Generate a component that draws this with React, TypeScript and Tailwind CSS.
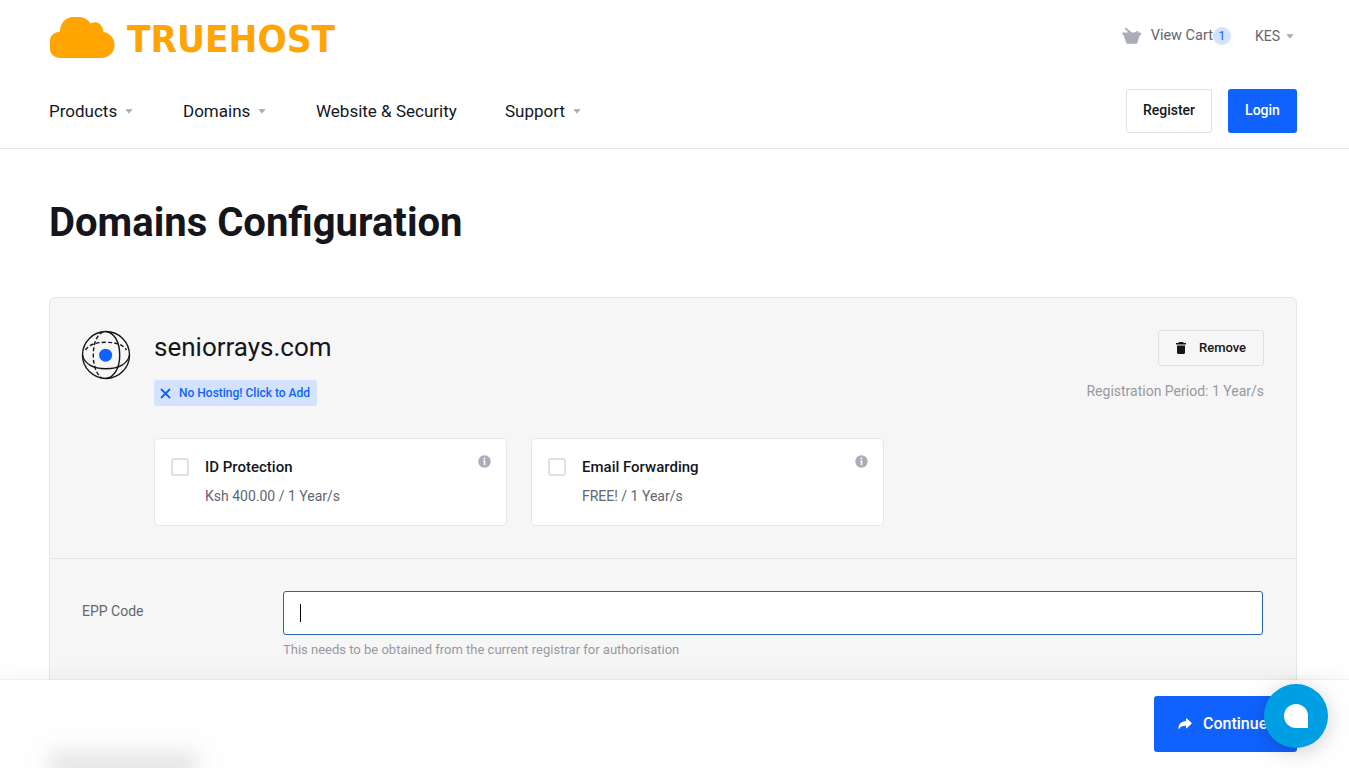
import React from 'react';

function Caret({ className = '' }: { className?: string }) {
  return (
    <svg width="8" height="5" viewBox="0 0 8 5" className={`shrink-0 ${className}`}>
      <path d="M0.8 0.3h6.4L4 4.3z" fill="#a9adb7" stroke="#a9adb7" strokeWidth="0.6" strokeLinejoin="round" />
    </svg>
  );
}

function Logo() {
  return (
    <svg width="290" height="44" viewBox="0 0 290 44" className="block">
      <path
        d="M11.5 42C5 42 1 37.500 1 33V24.500C1 20 4.500 16.500 11 15.500C11 7.500 16.500 1 24 1H30C35 1 39 3.500 41.500 7.500C47.500 4 54 8 54.500 16C61 17 65.500 22.500 65.500 29C65.500 36.500 60 42 52 42Z"
        fill="#ffa400"
      />
      <text
        x="78"
        y="35.500"
        textLength="208"
        lengthAdjust="spacingAndGlyphs"
        fontSize="38"
        fontWeight="700"
        fill="#ffa400"
        className="font-['DejaVu_Sans',sans-serif]"
      >
        TRUEHOST
      </text>
    </svg>
  );
}

function BasketIcon() {
  return (
    <svg width="20" height="18" viewBox="0 0 20 18" className="shrink-0">
      <path
        d="M0.500 5.400h6L2.700 1.700 4 0.400l5.600 5h3L15.300 3.900c.7-.3 1.100.2.900.7l-.5.800H19v2.300l-1.200.6-2.500 7.500c-.2.700-.6 1-1.300 1H5.500c-.7 0-1.100-.3-1.300-1L1.700 8.300.5 7.700z"
        fill="#a9adb7"
      />
    </svg>
  );
}

function GlobeIcon() {
  return (
    <svg width="50" height="50" viewBox="0 0 50 50" fill="none" stroke="#14161c" strokeWidth="1.400" className="block">
      <circle cx="25" cy="25" r="23.500" />
      <path d="M1.500 25C3 33.500 12 38.700 25 38.700S47 33.500 48.500 25" />
      <path d="M25 1.500C33.500 3 38.700 12 38.700 25S33.500 47 25 48.500" />
      <path d="M4.500 20C8 14.500 15 12.300 25 12.300S42 14.500 45.500 20" strokeDasharray="4 2.200" />
      <path d="M22 1.800C15.500 5 12.300 14 12.300 25S15.500 44 20.500 48" strokeDasharray="4 2.200" />
      <circle cx="24.600" cy="25.200" r="6.500" fill="#1062fe" stroke="none" />
    </svg>
  );
}

function InfoIcon() {
  return (
    <svg width="13" height="13" viewBox="0 0 13 13" className="block shrink-0">
      <circle cx="6.500" cy="6.500" r="6.200" fill="#a9adb7" />
      <circle cx="6.500" cy="3.600" r="1" fill="#fff" />
      <path d="M5 5.500h2.300v4.700H5.800V6.600H5z" fill="#fff" />
    </svg>
  );
}

function Addon({ title, price }: { title: string; price: string }) {
  return (
    <div className="flex h-[88px] w-[353px] rounded-[5px] border border-[#e6e7e9] bg-white pl-4 pr-[15px]">
      <span className="mt-[19px] size-[18px] shrink-0 rounded-[3px] border-2 border-[#dfe0e3] bg-white" />
      <div className="ml-4 flex-1 pt-[18px]">
        <div className="text-[15px] font-medium leading-5 text-[#14161c]">{title}</div>
        <div className="mt-[9px] text-sm leading-5 text-[#62666f]">{price}</div>
      </div>
      <div className="mt-4">
        <InfoIcon />
      </div>
    </div>
  );
}

const nav = [
  { label: 'Products', caret: true, width: 'w-[134px]' },
  { label: 'Domains', caret: true, width: 'w-[133px]' },
  { label: 'Website & Security', caret: false, width: 'w-[189px]' },
  { label: 'Support', caret: true, width: 'w-[100px]' },
];

export default function App() {
  return (
    <div className="relative h-[768px] w-[1349px] overflow-hidden bg-white font-['Roboto',sans-serif] text-[#14161c]">
      <header className="h-[149px] border-b border-[#e6e7e9] pl-[49px] pr-[52px]">
        <div className="flex h-[73px] items-center justify-between">
          <div className="mt-0.5">
            <Logo />
          </div>
          <div className="flex items-center pr-[3px] text-sm text-[#62666f]">
            <BasketIcon />
            <span className="ml-[9px] text-[14.500px]">View Cart</span>
            <span className="flex size-[18px] items-center justify-center rounded-full bg-[#d3e2ff] text-xs text-[#1062fe]">1</span>
            <span className="ml-6">KES</span>
            <Caret className="ml-1.5" />
          </div>
        </div>
        <div className="flex h-[76px] items-center justify-between">
          <nav className="flex text-[17px] leading-6">
            {nav.map((n) => (
              <div key={n.label} className={`flex items-center whitespace-nowrap ${n.width}`}>
                {n.label}
                {n.caret && <Caret className="ml-2" />}
              </div>
            ))}
          </nav>
          <div className="flex gap-4 text-sm font-medium">
            <button className="h-11 w-[86px] rounded-[3px] border border-[#dfe0e3] bg-white pb-0.5">Register</button>
            <button className="h-11 w-[69px] rounded-[3px] bg-[#1062fe] pb-0.5 text-white">Login</button>
          </div>
        </div>
      </header>

      <main className="pl-[49px] pr-[52px]">
        <h1 className="pt-[50px] text-[40px] font-bold leading-[48px]">Domains Configuration</h1>
        <section className="mt-[50px] h-[400px] rounded-md border border-[#e6e7e9] bg-[#f6f6f6]">
          <div className="flex h-[261px] border-b border-[#e6e7e9] pl-[31px] pr-8 pt-8">
            <GlobeIcon />
            <div className="ml-[23px] flex-1">
              <div className="text-[26px] leading-[34px]">seniorrays.com</div>
              <div className="mt-4 flex h-[26px] w-[163px] items-center rounded-[3px] bg-[#d3e2ff] pl-1.5 text-xs font-medium text-[#1062fe]">
                <svg width="11" height="11" viewBox="0 0 11 11" className="mr-2 shrink-0">
                  <path d="M1 1l9 9M10 1l-9 9" stroke="#1062fe" strokeWidth="1.800" />
                </svg>
                <span className="whitespace-nowrap">No Hosting! Click to Add</span>
              </div>
              <div className="mt-8 flex gap-6">
                <Addon title="ID Protection" price="Ksh 400.00 / 1 Year/s" />
                <Addon title="Email Forwarding" price="FREE! / 1 Year/s" />
              </div>
            </div>
            <div className="flex w-[200px] shrink-0 flex-col items-end">
              <button className="flex h-9 w-[106px] items-center rounded-[3px] border border-[#dfe0e3] pl-[17px] text-[13px] font-medium">
                <svg width="10" height="12" viewBox="0 0 10 12" className="mr-[13px]" fill="#14161c">
                  <path d="M3 0h4l.7.900H10v1.700H0V.9h2.300zM1 3.500h8v7.300c0 .7-.5 1.200-1.200 1.200H2.200C1.500 12 1 11.500 1 10.800z" />
                </svg>
                Remove
              </button>
              <div className="mt-[15px] text-sm leading-5 text-[#97999e]">Registration Period: 1 Year/s</div>
            </div>
          </div>
          <div className="flex pl-8 pr-[33px] pt-8">
            <div className="w-[201px] shrink-0 pt-2.500 text-sm leading-5 text-[#62666f]">
              <div className="pt-[10px]">EPP Code</div>
            </div>
            <div className="flex-1">
              <div className="flex h-11 items-center rounded-[3px] border border-[#2765ae] bg-white pl-4">
                <span className="h-[18px] w-px bg-black" />
              </div>
              <div className="mt-[5px] text-[13px] leading-5 text-[#97999e]">This needs to be obtained from the current registrar for authorisation</div>
            </div>
          </div>
        </section>
      </main>

      <footer className="absolute inset-x-0 bottom-0 flex h-[88px] items-center justify-end bg-[#fefefe] pr-[52px] shadow-[0_0_24px_rgba(0,0,0,0.06),0_-1px_1px_rgba(0,0,0,0.04)]">
        <span className="absolute -bottom-3 left-[49px] h-7 w-[148px] bg-[#e8e6e8] blur-[9px]" />
        <button className="flex h-14 w-[143px] items-center rounded-[3px] bg-[#1062fe] pl-6 text-base font-medium text-white">
          <svg width="14" height="12" viewBox="0 0 14 12" className="mr-[11px] shrink-0" fill="#fff">
            <path d="M8 .8c0-.5.400-.6.800-.3l4.700 4.300c.3.300.3.700 0 1L8.800 10.200c-.4.300-.8.200-.8-.3V7.700C4.500 7.600 2.800 8.300 1.200 10.700.9 11.100.4 11 .4 10.500.5 6.300 3.200 3.300 8 3z" />
          </svg>
          Continue
        </button>
      </footer>
      <div className="absolute left-[1264px] top-[684px] flex size-16 items-center justify-center rounded-full bg-[#009fe3] shadow-[0_4px_20px_rgba(0,0,0,0.18)]">
        <span className="size-6 rounded-full rounded-br-[1px] bg-white" />
      </div>
    </div>
  );
}
